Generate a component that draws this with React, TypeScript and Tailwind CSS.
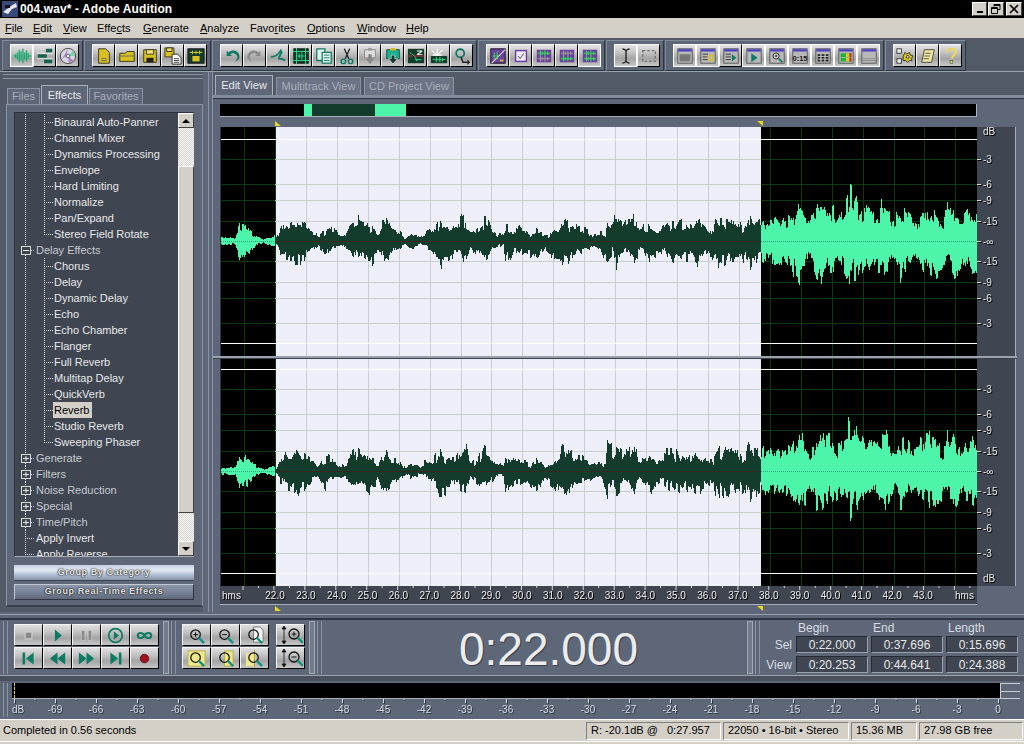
import type { ReactNode } from "react";
import { clsx } from "clsx";

// waveform envelopes, [x, amp] in page pixels
const UPPER: number[][] = [
  [221, 4], [235, 4], [237, 10], [239, 21], [243, 17], [248, 19], [250, 15], [253, 8], [258, 4], [263, 2], [270, 5], [274, 6],
  [276, 4], [280, 14], [285, 19], [290, 17], [298, 22], [305, 18], [312, 13], [318, 6], [325, 13], [330, 18], [338, 7], [345, 6],
  [350, 19], [358, 23], [365, 19], [372, 16], [378, 6], [384, 25], [390, 17], [400, 10], [405, 3], [412, 9], [420, 4], [425, 11],
  [432, 12], [440, 25], [445, 14], [455, 15], [465, 31], [470, 10], [475, 11], [485, 25], [490, 18], [495, 8], [500, 9], [503, 6],
  [505, 21], [510, 9], [515, 16], [525, 13], [530, 4], [535, 14], [545, 6], [552, 9], [560, 16], [562, 29], [567, 22], [575, 19],
  [585, 14], [590, 7], [600, 10], [605, 8], [607, 29], [610, 24], [616, 27], [622, 22], [634, 30], [637, 15], [647, 19], [657, 10],
  [665, 21], [673, 21], [690, 19], [698, 22], [707, 15], [713, 14], [715, 27], [720, 24], [730, 22], [738, 23], [743, 14], [748, 33],
  [755, 26], [760, 20], [761, 24], [770, 26], [780, 22], [790, 25], [800, 46], [803, 35], [810, 23], [820, 41], [830, 36], [837, 28],
  [843, 33], [850, 57], [855, 47], [858, 36], [865, 38], [875, 28], [885, 44], [892, 23], [902, 36], [913, 23], [922, 36], [930, 40],
  [942, 21], [947, 42], [953, 38], [960, 25], [968, 36], [976, 28],
];
const LOWER: number[][] = [
  [221, 4], [235, 4], [237, 12], [239, 22], [243, 17], [248, 18], [250, 14], [253, 7], [258, 4], [263, 2], [270, 5], [274, 5],
  [276, 4], [280, 13], [285, 18], [298, 25], [305, 17], [312, 10], [318, 6], [325, 20], [330, 10], [338, 6], [345, 8],
  [358, 20], [372, 24], [378, 8], [384, 26], [395, 12], [405, 4], [412, 9], [420, 4], [432, 11], [440, 26], [447, 25], [455, 12],
  [465, 27], [470, 8], [485, 22], [495, 7], [503, 6], [505, 24], [515, 12], [525, 14], [535, 21], [545, 8], [552, 20], [562, 23],
  [570, 26], [575, 14], [585, 10], [600, 9], [607, 26], [612, 14], [616, 26], [625, 10], [634, 27], [640, 10], [650, 24], [660, 12],
  [673, 22], [690, 20], [698, 26], [707, 14], [715, 24], [725, 26], [738, 20], [745, 24], [750, 31], [755, 26], [760, 18],
  [761, 21], [770, 24], [785, 26], [800, 44], [810, 22], [820, 46], [830, 30], [840, 27], [850, 46], [860, 30], [870, 27], [885, 35],
  [895, 19], [900, 40], [910, 24], [920, 26], [935, 44], [945, 20], [955, 43], [962, 28], [970, 32], [976, 34],
];

function envAt(points: number[][], x: number) {
  for (let i = 1; i < points.length; i++) {
    if (x <= points[i][0]) {
      const [x0, y0] = points[i - 1];
      const [x1, y1] = points[i];
      return y0 + ((y1 - y0) * (x - x0)) / (x1 - x0 || 1);
    }
  }
  return points[points.length - 1][1];
}

function noise(x: number, seed: number) {
  const a = Math.sin(Math.floor(x / 2) * 12.9898 + seed) * 43758.5453;
  const b = Math.sin(x * 78.233 + seed) * 24634.6345;
  return 0.7 * (a - Math.floor(a)) + 0.3 * (b - Math.floor(b));
}

function wavePath(from: number, to: number, center: number, seed: number) {
  let d = "";
  for (let x = from; x < to; x++) {
    const up = Math.round(envAt(UPPER, x) * (0.42 + 0.72 * noise(x, seed)));
    const down = Math.round(envAt(LOWER, x) * (0.42 + 0.72 * noise(x, seed + 3)));
    d += `M${x - 221 + 0.5} ${center - up}V${center + down}`;
  }
  return d;
}

const GRID_X = Array.from({ length: 24 }, (_, i) => Math.round(244 + i * 30.93) - 221);
const GRID_Y = [-82, -57, -41, -20, 20, 41, 57, 82];

function Channel({ height, center, seed }: { height: number; center: number; seed: number }) {
  return (
    <svg width={756} height={height} className="block shrink-0" shapeRendering="crispEdges">
      <rect width={756} height={height} fill="#000" />
      <rect x={54} width={486} height={height} fill="#eeeff8" />
      {GRID_X.map((x) => (
        <line key={x} x1={x + 0.5} x2={x + 0.5} y1={0} y2={height} stroke={x > 54 && x < 540 ? "#c8d0cf" : "#0b3a0b"} />
      ))}
      {GRID_Y.map((y) => (
        <g key={y}>
          <line x1={0} x2={54} y1={center + y + 0.5} y2={center + y + 0.5} stroke="#0b3a0b" />
          <line x1={54} x2={540} y1={center + y + 0.5} y2={center + y + 0.5} stroke="#c8d0cf" />
          <line x1={540} x2={756} y1={center + y + 0.5} y2={center + y + 0.5} stroke="#0b3a0b" />
        </g>
      ))}
      <line x1={0} x2={756} y1={center - 101.5} y2={center - 101.5} stroke="#fff" />
      <line x1={0} x2={756} y1={center + 102.5} y2={center + 102.5} stroke="#fff" />
      <path d={wavePath(221, 275, center, seed)} stroke="#4cf5aa" fill="none" />
      <path d={wavePath(275, 761, center, seed)} stroke="#143c2c" fill="none" />
      <path d={wavePath(761, 977, center, seed)} stroke="#4cf5aa" fill="none" />
      <line x1={0} x2={54} y1={center + 0.5} y2={center + 0.5} stroke="#2ca87c" strokeDasharray="1 1" />
      <line x1={54} x2={540} y1={center + 0.5} y2={center + 0.5} stroke="#33291f" />
      <line x1={540} x2={756} y1={center + 0.5} y2={center + 0.5} stroke="#2ca87c" strokeDasharray="1 1" />
    </svg>
  );
}

const DB_LABELS: [number, string][] = [
  [-82, "-3"], [-57, "-6"], [-41, "-9"], [-20, "-15"], [0, "-∞"], [20, "-15"], [41, "-9"], [57, "-6"], [82, "-3"],
];

function DbRuler({ height, center, db }: { height: number; center: number; db: number }) {
  return (
    <svg width={39} height={height} className="block shrink-0 bg-[#3f4652] border-r border-[#aab0ba]">
      <g className="drop-shadow-[1px_1px_0_#000]">
        <text x={6} y={db} fontSize={10} fill="#e8e8e8">dB</text>
        {DB_LABELS.map(([y, t]) => (
          <g key={y}>
            <line x1={0} x2={4} y1={center + y + 0.5} y2={center + y + 0.5} stroke="#d8d8d8" />
            <text x={6} y={center + y + 4} fontSize={10} fill="#e8e8e8">{t}</text>
          </g>
        ))}
      </g>
    </svg>
  );
}

function TimeRuler() {
  const ticks = Array.from({ length: 49 }, (_, i) => 23 + i * 15.465);
  const labels = Array.from({ length: 22 }, (_, i) => i + 22);
  return (
    <svg width={757} height={18} className="block bg-[#3f4652]">
      {ticks.map((x, i) => (
        <line key={i} x1={x} x2={x} y1={0} y2={i % 2 ? 2 : 4} stroke="#d8d8d8" />
      ))}
      <g className="drop-shadow-[1px_1px_0_#000]">
        <text x={2} y={13} fontSize={10} fill="#eee">hms</text>
        {labels.map((n, i) => (
          <text key={n} x={55 + i * 30.86} y={13} fontSize={10} fill="#eee" textAnchor="middle">{n}.0</text>
        ))}
        <text x={735} y={13} fontSize={10} fill="#eee">hms</text>
      </g>
    </svg>
  );
}

function Ico({ children, w = 18, h = 18 }: { children: ReactNode; w?: number; h?: number }) {
  return <svg viewBox="0 0 20 20" width={w} height={h}>{children}</svg>;
}

function TbButton({ on, children }: { on?: boolean; children: ReactNode }) {
  return (
    <div
      className={clsx(
        "w-[23px] h-[23px] flex items-center justify-center bg-[linear-gradient(#e4e4e4,#c4c4c4_35%,#a4a4a4_65%,#c8c8c8)] border",
        on ? "border-white" : "border-t-[#f4f4f4] border-l-[#f4f4f4] border-r-black border-b-black",
      )}
    >
      {children}
    </div>
  );
}

function ToolGroup({ children }: { children: ReactNode }) {
  return (
    <div className="flex h-[30px] items-center pl-[7px] pr-[3px] bg-[#5d6778] border-t border-l border-[#808a98] shadow-[1px_1px_0_#2f3540]">
      {children}
    </div>
  );
}

const TEAL = "#0f7a64";
const GOLD = "#d8c020";

const WaveMini = ({ c = "#0fae70" }: { c?: string }) => (
  <path d="M1 10h2M3 8v4M5 6v8M7 3v14M9 5v10M11 2v16M13 6v8M15 4v12M17 7v6M19 9v2" stroke={c} strokeWidth="1.4" fill="none" />
);
const Win = ({ children }: { children?: ReactNode }) => (
  <g>
    <rect x="2" y="2" width="16" height="16" fill="#b8b8b8" stroke="#555" />
    <rect x="2.5" y="2.5" width="15" height="2.5" fill="#4a3fc0" />
    {children}
  </g>
);
const PurpleWave = ({ top, bot }: { top: string; bot: string }) => (
  <g>
    <rect x="2" y="3" width="16" height="14" fill="#6a3fa0" />
    <path d="M3 7h14M6 4v6M8 5v4M11 4v6M14 5v4" stroke={top} strokeWidth="1.2" fill="none" />
    <path d="M3 13h14M6 10v6M8 11v4M11 10v6M14 11v4" stroke={bot} strokeWidth="1.2" fill="none" />
  </g>
);

const TOOLBAR: { on?: boolean; icon: ReactNode }[][] = [
  [
    { on: true, icon: <Ico><WaveMini /></Ico> },
    {
      icon: (
        <Ico>
          <path d="M11 2h7v4h-7zM2 8h10v4H2zM9 14h9v4H9z" fill="#16624c" />
          <path d="M1 7h18M1 13h18" stroke="#eee" />
        </Ico>
      ),
    },
    {
      icon: (
        <Ico>
          <circle cx="10" cy="10" r="8.5" fill="#d8d8e0" stroke="#444" />
          <path d="M10 2 8 10l-5 4zM11 18l-1-8 6 5z" fill="#b080d0" />
          <path d="M16 4l-6 6 8 0z" fill="#80d0b0" />
          <circle cx="10" cy="10" r="2" fill="#fff" stroke="#555" />
        </Ico>
      ),
    },
  ],
  [
    { icon: <Ico><path d="M4 2h8l4 4v12H4z" fill={GOLD} stroke="#332" /><path d="M7 13h6M7 15h6" stroke="#665" /></Ico> },
    { icon: <Ico><path d="M2 7h6l2-2h8v11H2z" fill={GOLD} stroke="#332" /><path d="M2 10h16" stroke="#665" /></Ico> },
    { icon: <Ico><path d="M3 3h14v14H3z" fill={GOLD} stroke="#332" /><path d="M6 3h8v5H6z" fill="#f0e070" stroke="#332" /><path d="M6 12h8v5H6z" fill="#222" /></Ico> },
    {
      icon: (
        <Ico>
          <path d="M1 1h10v10H1z" fill={GOLD} stroke="#332" />
          <path d="M3 1h6v4H3z" fill="#f0e070" stroke="#332" />
          <path d="M9 8h6l4 4v7H9z" fill="#fff" stroke="#222" />
          <path d="M11 13h6M11 15h6M11 17h6" stroke="#333" />
        </Ico>
      ),
    },
    {
      icon: (
        <Ico>
          <rect x="1" y="2" width="18" height="16" fill="#143c2c" stroke="#111" />
          <path d="M3 6h14M6 4v4M10 4v4M14 4v4" stroke="#e0d040" />
          <rect x="6" y="10" width="8" height="6" fill={GOLD} />
        </Ico>
      ),
    },
  ],
  [
    { icon: <Ico><path d="M4 4v6h6L8 8c3-2 7-1 8 3 0 2-1 4-3 5 4 0 6-3 5-7-1-5-7-7-12-3z" fill={TEAL} /></Ico> },
    { icon: <Ico><path d="M16 4v6h-6l2-2c-3-2-7-1-8 3 0 2 1 4 3 5-4 0-6-3-5-7 1-5 7-7 12-3z" fill="#8a8a8a" /></Ico> },
    { icon: <Ico><path d="M2 11c4 0 8-2 11-7l1 2c-2 3-3 5-3 7 2 0 4 0 7 2" stroke={TEAL} strokeWidth="2" fill="none" /></Ico> },
    {
      icon: (
        <Ico>
          <rect x="2" y="2" width="16" height="16" fill="#143c2c" stroke="#111" />
          <path d="M5 1v18M15 1v18M1 5h18M1 15h18" stroke="#35e090" />
          <path d="M6 10h8M8 7v6M11 6v8" stroke="#35e090" />
        </Ico>
      ),
    },
    { icon: <Ico><path d="M2 2h9v13H2z" fill="#e0f4ee" stroke={TEAL} strokeWidth="1.4" /><path d="M8 6h10v12H8z" fill="#e0f4ee" stroke={TEAL} strokeWidth="1.4" /><path d="M10 9h6M10 12h6M10 15h6" stroke={TEAL} /></Ico> },
    { icon: <Ico><path d="M7 2l5 11M13 2 8 13" stroke="#222" strokeWidth="1.4" /><circle cx="6" cy="16" r="2.5" fill="none" stroke={TEAL} strokeWidth="1.6" /><circle cx="14" cy="16" r="2.5" fill="none" stroke={TEAL} strokeWidth="1.6" /></Ico> },
    { icon: <Ico><path d="M4 3h12v9H4z" fill="#ddd" stroke="#888" /><path d="M8 1h4v3H8z" fill="#999" /><path d="M8 8h4v5h3l-5 6-5-6h3z" fill="#888" /></Ico> },
    { icon: <Ico><path d="M3 3h14v10H3z" fill="#18b090" stroke="#0a5040" /><path d="M8 1h4l2 3H6z" fill={GOLD} /><path d="M8 9h4v4h3l-5 6-5-6h3z" fill="#143c2c" stroke="#fff" strokeWidth=".6" /></Ico> },
    { icon: <Ico><rect x="1" y="2" width="18" height="16" fill="#143c2c" /><path d="M1 10h18" stroke="#d03030" /><path d="M3 6l6 5 2 5M9 14h7" stroke="#35e090" /><path d="M11 4h6v1l-4 3h4v1h-6V8l4-3h-4z" fill="#fff" /></Ico> },
    { icon: <Ico><path d="M2 4l6 5M8 2v7M14 3 8 9M3 9h10" stroke="#fff" strokeWidth="1.2" /><rect x="1" y="10" width="18" height="8" fill="#143c2c" /><path d="M3 14h14M7 11v6M11 11v6M14 12v4" stroke="#35e090" /></Ico> },
    { icon: <Ico><circle cx="8" cy="7" r="4.5" fill="none" stroke={TEAL} strokeWidth="2" /><path d="M9 11l2 6h7" stroke="#222" strokeWidth="1.6" fill="none" /><path d="M16 14l3 3-3 3z" fill="#222" /></Ico> },
  ],
  [
    { icon: <Ico><rect x="2" y="2" width="16" height="16" fill="#6a3fa0" stroke="#111" /><path d="M3 18 18 3" stroke="#ddd" strokeWidth="1.2" /><path d="M4 10h7M6 6v8M9 5v9" stroke="#35e050" /><rect x="12" y="14" width="4" height="2" fill={GOLD} /></Ico> },
    { icon: <Ico><rect x="4" y="4" width="12" height="12" fill="#f0eaf8" stroke="#6a3fa0" strokeWidth="1.6" /><path d="M7 10l2 3 4-6" stroke="#555" fill="none" /></Ico> },
    { icon: <Ico><PurpleWave top="#35e050" bot="#9a9a9a" /></Ico> },
    { icon: <Ico><PurpleWave top="#9a9a9a" bot="#35e050" /></Ico> },
    { on: true, icon: <Ico><PurpleWave top="#35e050" bot="#35e050" /></Ico> },
  ],
  [
    { on: true, icon: <Ico><path d="M6 2c2 0 3 1 4 2 1-1 2-2 4-2M10 4v12M6 18c2 0 3-1 4-2 1 1 2 2 4 2" stroke="#111" strokeWidth="1.4" fill="none" /></Ico> },
    { icon: <Ico><rect x="3" y="4" width="14" height="12" fill="none" stroke="#777" strokeWidth="1.6" strokeDasharray="3 2" /></Ico> },
  ],
  [
    { on: true, icon: <Ico><Win><rect x="4" y="8" width="12" height="8" fill="#777" /></Win></Ico> },
    { on: true, icon: <Ico><Win><path d="M4 8h6M4 11h6M4 14h6" stroke="#333" /><circle cx="13" cy="12" r="3" fill="none" stroke="#d8c020" strokeWidth="1.6" /></Win></Ico> },
    { icon: <Ico><Win><path d="M4 8h6M4 11h6M4 14h6" stroke="#333" /><path d="M11 8l5 4-5 4z" fill={TEAL} /></Win></Ico> },
    { on: true, icon: <Ico><Win><path d="M7 7l7 5-7 5z" fill={TEAL} /></Win></Ico> },
    { on: true, icon: <Ico><Win><circle cx="9" cy="10" r="3.4" fill="#eee" stroke="#111" /><path d="M9 8.5v3M7.5 10h3" stroke="#111" /><path d="M12 13l4 4" stroke={TEAL} strokeWidth="2" /></Win></Ico> },
    { on: true, icon: <Ico><Win><text x="10" y="15" fontSize="8" fontWeight="bold" textAnchor="middle" fill="#111">0:15</text></Win></Ico> },
    { on: true, icon: <Ico><Win><path d="M4 8h3v8H4zM8.5 8h3v8h-3zM13 8h3v8h-3z" fill="#222" /><path d="M4 10.5h12M4 13.5h12" stroke="#ccc" /></Win></Ico> },
    { on: true, icon: <Ico><Win><path d="M4 7h12v4H4zM4 12h12v4H4z" fill="#22b040" /><path d="M10 7h4v4h-4zM10 12h4v4h-4z" fill="#e8c020" /><path d="M14 7h2v4h-2zM14 12h2v4h-2z" fill="#d02020" /></Win></Ico> },
    { on: true, icon: <Ico><Win><path d="M3 13h14M3 15h14" stroke="#888" /></Win></Ico> },
  ],
  [
    { icon: <Ico><rect x="1" y="2" width="5" height="5" fill="#eee" stroke="#333" /><rect x="1" y="13" width="5" height="5" fill="#eee" stroke="#333" /><path d="M8 10l2-4 2 2 3-2 1 3 3 1-2 3 1 2-3 0-2 2-2-2-3 0z" fill={GOLD} stroke="#332" /><circle cx="13" cy="11" r="1.6" fill="#ddd" stroke="#332" /></Ico> },
    { icon: <Ico><path d="M6 3h11l-3 14H3z" fill="#ece4a0" stroke="#443" /><path d="M7 7h6M6 10h6M5 13h6" stroke="#554" /></Ico> },
    { icon: <Ico><path d="M6 6c0-5 9-5 9 0 0 3-4 3-4 7" stroke="#e8d860" strokeWidth="2.6" fill="none" /><rect x="9" y="15" width="3" height="3" fill="#e8d860" stroke="#443" strokeWidth=".6" /></Ico> },
  ],
];

const Ctl = ({ children }: { children: ReactNode }) => (
  <div className="w-[29px] h-[22px] flex items-center justify-center bg-[linear-gradient(#e0e0e0,#c4c4c4_35%,#a4a4a4_65%,#c8c8c8)] border border-t-[#f4f4f4] border-l-[#f4f4f4] border-r-black border-b-black">
    {children}
  </div>
);

const Mag = ({ sign }: { sign?: "+" | "-" }) => (
  <g>
    <circle cx="9" cy="9" r="5" fill="none" stroke="#111" strokeWidth="1.3" />
    {sign && <path d="M6.5 9h5" stroke="#111" />}
    {sign === "+" && <path d="M9 6.5v5" stroke="#111" />}
    <path d="M12.5 12.5 18 18" stroke="#10907c" strokeWidth="2.4" />
  </g>
);

const TRANSPORT: ReactNode[] = [
  <rect key="a" x="6" y="6" width="8" height="8" fill="#8a8a8a" stroke="#ddd" />,
  <path key="b" d="M7 3l8 7-8 7z" fill={TEAL} />,
  <path key="c" d="M4 4h4v12H4zM12 4h4v12h-4z" fill="#8a8a8a" stroke="#ddd" strokeWidth=".6" />,
  <g key="d"><circle cx="10" cy="10" r="8" fill="none" stroke={TEAL} strokeWidth="2" /><path d="M8 5l6 5-6 5z" fill={TEAL} /></g>,
  <path key="e" d="M10 10c-2-4-8-4-8 0s6 4 8 0c2-4 8-4 8 0s-6 4-8 0z" fill="none" stroke={TEAL} strokeWidth="2.4" />,
  <path key="f" d="M3 3h3v14H3zM16 3v14L7 10z" fill={TEAL} />,
  <path key="g" d="M10 3v14L1 10zM19 3v14l-9-7z" fill={TEAL} />,
  <path key="h" d="M1 3l9 7-9 7zM10 3l9 7-9 7z" fill={TEAL} />,
  <path key="i" d="M4 3l9 7-9 7zM14 3h3v14h-3z" fill={TEAL} />,
  <circle key="j" cx="10" cy="10" r="5" fill="#a01020" stroke="#601018" />,
];

const ZOOMS: ReactNode[] = [
  <Mag key="a" sign="+" />,
  <Mag key="b" sign="-" />,
  <g key="c"><path d="M9 1h7l3 3v13H9z" fill="#f4f4f4" stroke="#777" /><Mag /></g>,
  <g key="d"><rect x="1" y="2" width="18" height="16" fill="#f0e890" stroke="#b8b040" /><Mag /></g>,
  <g key="e"><rect x="9" y="2" width="9" height="16" fill="#f0e890" stroke="#b8b040" /><Mag /></g>,
  <g key="f"><rect x="1" y="4" width="10" height="14" fill="#f0e890" /><path d="M10 1v18" stroke="#aa9a20" /><Mag /></g>,
];

const VArrow = () => <path d="M3 3v14M3 1 1 4h4zM3 19l-2-3h4z" fill="#111" stroke="#111" strokeWidth=".8" />;

function Grip({ vertical = true }: { vertical?: boolean }) {
  return vertical ? (
    <div className="w-[5px] h-full border-x border-[#8a93a3] shrink-0" />
  ) : (
    <div className="h-[5px] w-full border-y border-[#8a93a3]" />
  );
}

const Handle = () => <div className="w-[6px] h-full bg-[#727b8a] border border-[#a0a8b4] shrink-0" />;

type Row = { label: string; kind: "mid" | "end" | "open" | "closed" | "leaf"; sel?: boolean };
const TREE: Row[] = [
  { label: "Binaural Auto-Panner", kind: "mid" },
  { label: "Channel Mixer", kind: "mid" },
  { label: "Dynamics Processing", kind: "mid" },
  { label: "Envelope", kind: "mid" },
  { label: "Hard Limiting", kind: "mid" },
  { label: "Normalize", kind: "mid" },
  { label: "Pan/Expand", kind: "mid" },
  { label: "Stereo Field Rotate", kind: "end" },
  { label: "Delay Effects", kind: "open" },
  { label: "Chorus", kind: "mid" },
  { label: "Delay", kind: "mid" },
  { label: "Dynamic Delay", kind: "mid" },
  { label: "Echo", kind: "mid" },
  { label: "Echo Chamber", kind: "mid" },
  { label: "Flanger", kind: "mid" },
  { label: "Full Reverb", kind: "mid" },
  { label: "Multitap Delay", kind: "mid" },
  { label: "QuickVerb", kind: "mid" },
  { label: "Reverb", kind: "mid", sel: true },
  { label: "Studio Reverb", kind: "mid" },
  { label: "Sweeping Phaser", kind: "end" },
  { label: "Generate", kind: "closed" },
  { label: "Filters", kind: "closed" },
  { label: "Noise Reduction", kind: "closed" },
  { label: "Special", kind: "closed" },
  { label: "Time/Pitch", kind: "closed" },
  { label: "Apply Invert", kind: "leaf" },
  { label: "Apply Reverse", kind: "leaf" },
];

function TreeLines({ kind }: { kind: Row["kind"] }) {
  const dot = { stroke: "#e0e0e0", strokeDasharray: "1 1", fill: "none" };
  if (kind === "mid" || kind === "end") {
    return (
      <svg width={38} height={16} className="shrink-0">
        <path d="M10.5 0v16" {...dot} />
        <path d={kind === "end" ? "M29.5 0v8" : "M29.5 0v16"} {...dot} />
        <path d="M29 8.5h9" {...dot} />
      </svg>
    );
  }
  if (kind === "leaf") {
    return (
      <svg width={20} height={16} className="shrink-0">
        <path d="M10.5 0v16M10 8.5h9" {...dot} />
      </svg>
    );
  }
  return (
    <svg width={20} height={16} className="shrink-0">
      <path d="M10.5 0v4M10.5 13v3M16 8.5h4" {...dot} />
      <rect x="6.5" y="4.5" width="9" height="8" fill="none" stroke="#d8d8d8" />
      <path d="M8 8.5h6" stroke="#e8e8e8" />
      {kind === "closed" && <path d="M11 6v5" stroke="#e8e8e8" />}
    </svg>
  );
}

function Tree() {
  return (
    <div className="flex-1 h-full overflow-hidden pt-px">
      {TREE.map((r) => {
        const nested = r.kind === "mid" || r.kind === "end";
        return (
          <div key={r.label} className="h-4 flex items-center whitespace-nowrap">
            <TreeLines kind={r.kind} />
            <span
              className={clsx(
                "leading-4 pl-px",
                r.sel ? "bg-[#d4d0c8] text-black pr-[3px]" : nested || r.kind === "leaf" ? "text-[#e8e8e8]" : "text-[#c6cad0]",
              )}
            >
              {r.label}
            </span>
          </div>
        );
      })}
    </div>
  );
}

const CHECKER = "bg-[repeating-conic-gradient(#d4d0c8_0_25%,#ffffff_0_50%)] bg-[length:2px_2px]";

const ScrollBtn = ({ up }: { up?: boolean }) => (
  <div className="h-[15px] shrink-0 flex items-center justify-center bg-[#d4d0c8] border border-t-white border-l-white border-r-[#404040] border-b-[#404040]">
    <div className={clsx("w-0 h-0 border-x-[4px] border-x-transparent", up ? "border-b-[4px] border-b-black" : "border-t-[4px] border-t-black")} />
  </div>
);

function LeftPanel() {
  return (
    <div className="w-[203px] h-full flex flex-col bg-[#525a67] shrink-0">
      <div className="pl-[3px] pt-[2px]">
        <Grip vertical={false} />
      </div>
      <div className="h-[26px] mt-[-1px] pl-[7px] flex items-end">
        <div className="w-[33px] h-[16px] flex items-center justify-center bg-[#5d6778] text-[#a8afba] border-t border-l border-r border-[#8a93a3]">Files</div>
        <div className="w-[47px] h-[19px] ml-px flex items-center justify-center bg-[#5d6778] text-[#e8e8e8] border-t border-l border-r border-[#aab0ba]">Effects</div>
        <div className="w-[54px] h-[16px] ml-px flex items-center justify-center bg-[#5d6778] text-[#a8afba] border-t border-l border-r border-[#8a93a3]">Favorites</div>
      </div>
      <div className="ml-[6px] h-[503px] bg-[#5d6778] border-t border-l border-[#8a93a3] border-r border-b-2 border-r-[#8a93a3] border-b-[#3a414c] pl-[7px] pr-[8px] pt-[7px] flex flex-col">
        <div className="h-[445px] shrink-0 flex bg-[#3f4652] border-t border-l border-[#2c323b] border-r-[#aab0ba] border-b border-b-[#aab0ba] overflow-hidden">
          <Tree />
          <div className="w-[16px] h-full flex flex-col shrink-0">
            <ScrollBtn up />
            <div className={clsx("h-[38px] shrink-0", CHECKER)} />
            <div className="h-[347px] shrink-0 bg-[#d4d0c8] border border-t-white border-l-white border-r-[#404040] border-b-[#404040]" />
            <div className={clsx("flex-1", CHECKER)} />
            <ScrollBtn />
          </div>
        </div>
        <div className="mt-[8px] h-[16px] shrink-0 flex items-center justify-center bg-[linear-gradient(#c4d0e4,#e4eaf4_35%,#a8b8d0_70%,#8b95a6)] border-b border-[#3a414c] text-[9px] font-bold tracking-[0.6px] text-[#f0f0f0] [text-shadow:0_0_2px_#000,0_0_1px_#000]">
          Group By Category
        </div>
        <div className="mt-[3px] h-[16px] shrink-0 flex items-center justify-center bg-[linear-gradient(#8d97aa,#79849a_50%,#5f6978)] border border-t-[#c4cad4] border-l-[#c4cad4] border-r-[#2f3540] border-b-[#2f3540] text-[9px] font-bold tracking-[0.6px] text-[#e8e8e8] [text-shadow:0_0_2px_#000,0_0_1px_#000]">
          Group Real-Time Effects
        </div>
      </div>
    </div>
  );
}

const Marker = ({ flip }: { flip?: boolean }) => (
  <svg width={6} height={5} className="block">
    <path d={flip ? "M0 0h6L6 5z" : "M0 0l6 5H0z"} fill="#e8d820" />
  </svg>
);

function Editor() {
  return (
    <div className="flex-1 h-full flex flex-col bg-[#5d6778] border-l border-[#8a93a3] min-w-0">
      <div className="h-[26px] shrink-0 bg-[#525a67] border-b-[3px] border-[#838c9a] flex items-end pl-[2px] shadow-[0_1px_0_#2f3540]">
        <div className="w-[58px] h-[20px] flex items-center justify-center bg-[#5d6778] text-[#e8e8e8] border-t border-l border-r border-[#aab0ba]">Edit View</div>
        <div className="w-[85px] h-[18px] ml-[3px] flex items-center justify-center bg-[#6b7484] text-[#a8afba] border-t border-l border-r border-[#8a93a3]">Multitrack View</div>
        <div className="w-[90px] h-[18px] ml-[3px] flex items-center justify-center bg-[#6b7484] text-[#a8afba] border-t border-l border-r border-[#8a93a3]">CD Project View</div>
      </div>
      <div className="pl-[7px] pt-[6px] flex flex-col flex-1 min-h-0">
        <div className="w-[757px] h-[13px] bg-black border-r border-b border-[#aab0ba] flex items-stretch pl-[84px]">
          <div className="w-[8px] bg-[#4cf5aa]" />
          <div className="w-[63px] bg-[#143c2c]" />
          <div className="w-[31px] bg-[#4cf5aa]" />
        </div>
        <div className="h-[6px] mt-[4px] pl-[55px] flex">
          <Marker />
          <div className="w-[476px]" />
          <Marker flip />
        </div>
        <div className="flex">
          <div className="w-px bg-[#2f3540]" />
          <Channel height={229} center={114} seed={1} />
          <DbRuler height={229} center={114} db={8} />
        </div>
        <div className="-ml-[7px] w-[804px] h-[3px] bg-[#9aa2ae] border-b border-[#3a414c]" />
        <div className="flex">
          <div className="w-px bg-[#2f3540]" />
          <Channel height={227} center={112} seed={1.02} />
          <DbRuler height={227} center={112} db={223} />
        </div>
        <TimeRuler />
        <div className="w-[757px] h-px bg-[#aab0ba]" />
        <div className="h-[6px] mt-px pl-[55px] flex">
          <Marker />
          <div className="w-[476px]" />
          <Marker flip />
        </div>
      </div>
    </div>
  );
}

function Readout({ v }: { v: string }) {
  return (
    <div className="w-[72px] h-[17px] flex items-center justify-center bg-[#3f4652] border border-t-[#262b33] border-l-[#262b33] border-r-[#9aa2ae] border-b-[#9aa2ae] text-[#e8e8e8] text-[12px]">
      {v}
    </div>
  );
}

function Transport() {
  return (
    <div className="h-[64px] shrink-0 flex flex-col bg-[#5d6778]">
      <div className="h-[2px]" />
      <div className="h-px bg-[#9aa2ae]" />
      <div className="h-[3px]" />
      <div className="h-[2px] bg-[#2f3540]" />
      <div className="flex-1 min-h-0 flex border-b border-[#9aa2ae] pl-[3px] py-[1px]">
        <Grip />
        <div className="ml-[6px] mt-[3px] grid grid-cols-5 gap-y-px h-[45px]">
          {TRANSPORT.map((t, i) => (
            <Ctl key={i}><Ico w={17} h={17}>{t}</Ico></Ctl>
          ))}
        </div>
        <div className="ml-[4px]"><Handle /></div>
        <div className="ml-[2px]"><Grip /></div>
        <div className="ml-[6px] mt-[3px] grid grid-cols-3 gap-y-px h-[45px]">
          {ZOOMS.map((t, i) => (
            <Ctl key={i}><Ico w={19} h={19}>{t}</Ico></Ctl>
          ))}
        </div>
        <div className="ml-[7px] mt-[3px] flex flex-col gap-y-px h-[45px]">
          <Ctl><Ico w={24} h={20}><VArrow /><g transform="translate(4 0)"><Mag sign="+" /></g></Ico></Ctl>
          <Ctl><Ico w={24} h={20}><VArrow /><g transform="translate(4 0)"><Mag sign="-" /></g></Ico></Ctl>
        </div>
        <div className="ml-[4px]"><Handle /></div>
        <div className="ml-[2px]"><Grip /></div>
        <div className="flex-1 flex items-center justify-center text-[46px] leading-none text-[#ececec] [text-shadow:1px_1px_0_#3a414c] pt-[2px] pl-[28px]">
          0:22.000
        </div>
        <Handle />
        <div className="ml-[2px]"><Grip /></div>
        <div className="w-[264px] flex flex-col text-[#d8dce2] text-[12px] leading-none">
          <div className="h-[14px] pl-[38px] flex items-center">
            <span className="w-[75px]">Begin</span>
            <span className="w-[75px]">End</span>
            <span>Length</span>
          </div>
          <div className="flex items-center gap-[3px] mt-[1px]">
            <span className="w-[32px] text-right mr-[1px]">Sel</span>
            <Readout v="0:22.000" />
            <Readout v="0:37.696" />
            <Readout v="0:15.696" />
          </div>
          <div className="flex items-center gap-[3px] mt-[3px]">
            <span className="w-[32px] text-right mr-[1px]">View</span>
            <Readout v="0:20.253" />
            <Readout v="0:44.641" />
            <Readout v="0:24.388" />
          </div>
        </div>
      </div>
    </div>
  );
}

function Meter() {
  const labels = Array.from({ length: 23 }, (_, i) => -69 + i * 3);
  return (
    <div className="h-[43px] shrink-0 flex flex-col bg-[#5d6778]">
      <div className="h-[5px] bg-[#4a515d] shrink-0" />
      <div className="flex-1 flex pl-[3px] py-[2px] min-h-0">
        <Grip />
        <div className="ml-[4px] flex-1 flex flex-col">
          <div className="flex h-[16px] shrink-0">
            <div className="w-[988px] bg-black border-b border-[#aab0ba] pl-[2px]">
              <div className="w-px h-full border-l border-dashed border-[#e8d820]" />
            </div>
            <div className="w-[20px] border-l border-[#c8ccd2] flex flex-col">
              <div className="flex-1 border-y border-[#c8ccd2]" />
              <div className="flex-1 border-b border-[#c8ccd2]" />
            </div>
          </div>
          <svg width={1012} height={18} className="block">
            <g className="drop-shadow-[1px_1px_0_#2f3540]">
              {Array.from({ length: 49 }, (_, i) => 2.5 + i * 20.5).map((x, i) => (
                <line key={i} x1={x} x2={x} y1={0} y2={i % 2 ? 1 : 4} stroke="#d8dce2" />
              ))}
              <text x={0} y={14} fontSize={10} fill="#d8dce2">dB</text>
              {labels.map((n, i) => (
                <text key={n} x={43 + i * 41} y={14} fontSize={10} fill="#d8dce2" textAnchor="middle">{n}</text>
              ))}
              <text x={986} y={14} fontSize={10} fill="#d8dce2" textAnchor="middle">0</text>
            </g>
          </svg>
        </div>
      </div>
    </div>
  );
}

const StatusBox = ({ className, children }: { className: string; children: ReactNode }) => (
  <div className={clsx("h-[18px] flex items-center px-[4px] whitespace-pre border border-t-[#808080] border-l-[#808080] border-r-white border-b-white", className)}>
    {children}
  </div>
);

export default function App() {
  return (
    <div className="w-[1024px] h-[744px] flex flex-col overflow-hidden bg-[#5d6778] text-[11px] font-['Liberation_Sans',Arial,sans-serif]">
      {/* title bar */}
      <div className="h-[18px] shrink-0 bg-black flex items-center pl-[2px] pr-[2px]">
        <svg width={16} height={16} viewBox="0 0 16 16" className="shrink-0">
          <rect width="16" height="16" fill="#3a4a78" />
          <path d="M1 11 9 5l5-3 1 4-5 2-4 5z" fill="#e8e8f0" />
          <path d="M3 4h5v3H3z" fill="#141420" />
        </svg>
        <span className="ml-[2px] text-white font-bold text-[12px] tracking-[0.1px] leading-none">004.wav* - Adobe Audition</span>
        <div className="ml-auto flex items-center">
          <div className="w-[15px] h-[14px] bg-[#d4d0c8] border border-t-white border-l-white border-r-[#404040] border-b-[#404040] flex items-end justify-center pb-[2px]">
            <div className="w-[6px] h-[2px] bg-black" />
          </div>
          <svg width={16} height={14} className="ml-[1px] bg-[#d4d0c8] border border-t-white border-l-white border-r-[#404040] border-b-[#404040]" viewBox="0 0 14 12">
            <path d="M5 1.5h6v5H9M5 1.5v2M5 2.5h6M2.5 4.5h6v6h-6zM2.5 5.5h6" stroke="#000" fill="none" />
          </svg>
          <svg width={16} height={14} className="ml-[2px] bg-[#d4d0c8] border border-t-white border-l-white border-r-[#404040] border-b-[#404040]" viewBox="0 0 14 12">
            <path d="M3 2l8 8M11 2l-8 8" stroke="#000" strokeWidth="1.6" />
          </svg>
        </div>
      </div>

      {/* menu bar */}
      <div className="h-[20px] shrink-0 bg-[#d4d0c8] flex items-center pl-[5px] text-black">
        <span className="w-[28px]"><u>F</u>ile</span>
        <span className="w-[30px]"><u>E</u>dit</span>
        <span className="w-[34px]"><u>V</u>iew</span>
        <span className="w-[46px]">Effe<u>c</u>ts</span>
        <span className="w-[57px]"><u>G</u>enerate</span>
        <span className="w-[50px]"><u>A</u>nalyze</span>
        <span className="w-[57px]">Favo<u>r</u>ites</span>
        <span className="w-[50px]"><u>O</u>ptions</span>
        <span className="w-[49px]"><u>W</u>indow</span>
        <span><u>H</u>elp</span>
      </div>

      {/* toolbar */}
      <div className="h-[34px] shrink-0 bg-[#525a67] border-b border-[#9aa2ae] flex pl-[2px] pt-[2px] gap-[2px]">
        {TOOLBAR.map((group, i) => (
          <ToolGroup key={i}>
            {group.map((b, j) => (
              <TbButton key={j} on={b.on}>{b.icon}</TbButton>
            ))}
          </ToolGroup>
        ))}
      </div>

      {/* main */}
      <div className="h-[540px] shrink-0 flex">
        <LeftPanel />
        <div className="w-[6px] shrink-0 border-r border-[#8a93a3] bg-[#5d6778]" />
        <div className="w-[3px] shrink-0 bg-[#5d6778]" />
        <Editor />
      </div>

      <Transport />
      <Meter />

      {/* status bar */}
      <div className="h-[25px] shrink-0 flex flex-col bg-[#d4d0c8] text-black">
        <div className="h-px bg-white shrink-0" />
        <div className="h-[21px] flex items-center pl-[3px]">
          <span className="w-[583px]">Completed in 0.56 seconds</span>
          <StatusBox className="w-[135px]">{"R: -20.1dB @   0:27.957"}</StatusBox>
          <StatusBox className="w-[126px] ml-[2px]">22050 • 16-bit • Stereo</StatusBox>
          <StatusBox className="w-[66px] ml-[2px]">15.36 MB</StatusBox>
          <StatusBox className="w-[104px] ml-[2px]">27.98 GB free</StatusBox>
        </div>
        <div className="h-px bg-white shrink-0" />
      </div>
    </div>
  );
}
